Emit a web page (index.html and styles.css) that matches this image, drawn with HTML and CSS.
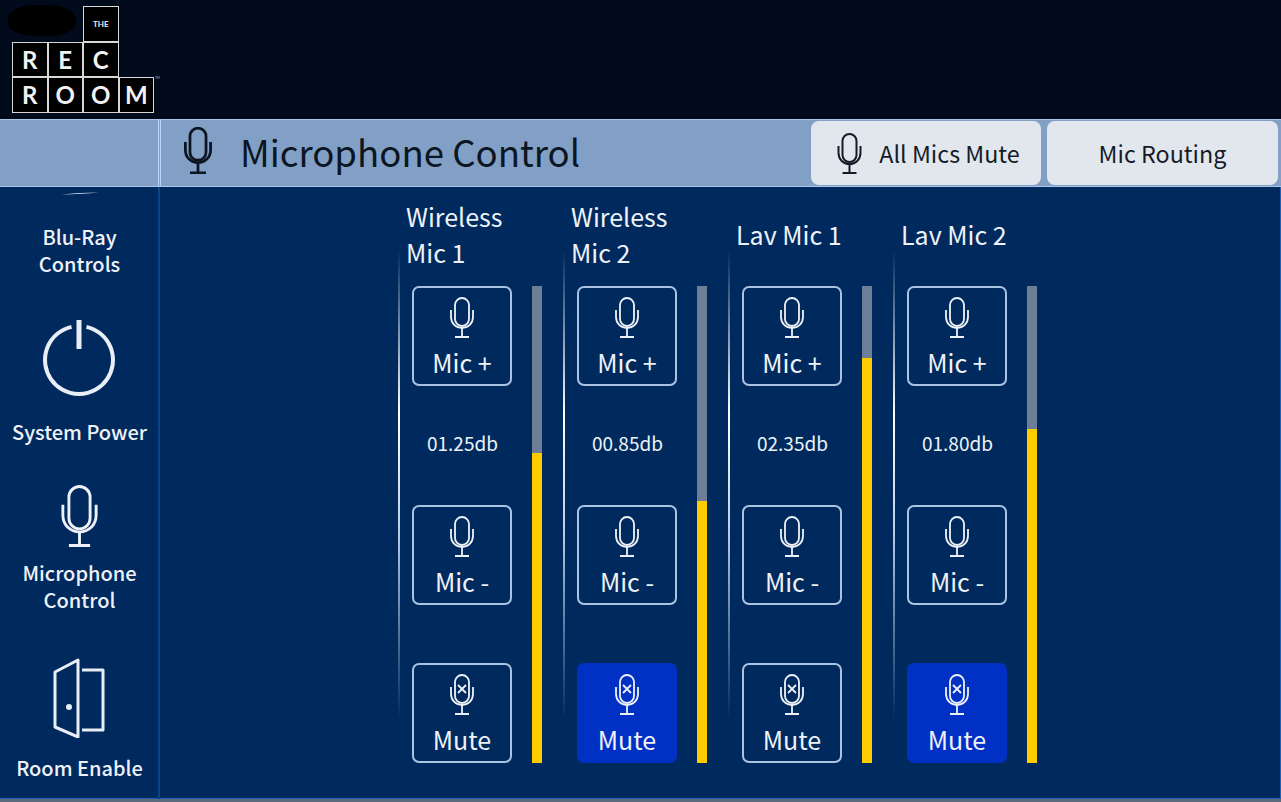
FILE: index.html
```html
<!DOCTYPE html>
<html lang="en">
<head>
    <meta charset="UTF-8">
    <meta name="viewport" content="width=device-width, initial-scale=1.0">
    <title>Microphone Control</title>
    <link rel="stylesheet" href="styles.css">
</head>
<body>

    <svg class="defs" width="0" height="0" aria-hidden="true">
        <symbol id="mic" viewBox="0 0 24 41">
            <g fill="none" stroke="currentColor">
                <rect x="5" y="1" width="14" height="28" rx="7"/>
                <path d="M1 13v7c0 6.500 5 11 11 11s11-4.500 11-11v-7"/>
                <path d="M12 31v9M5 40h14"/>
            </g>
        </symbol>
        <symbol id="mic-off" viewBox="0 0 24 41">
            <g fill="none" stroke="currentColor">
                <rect x="5" y="1" width="14" height="28" rx="7"/>
                <path d="M1 13v7c0 6.500 5 11 11 11s11-4.500 11-11v-7"/>
                <path d="M12 31v9M5 40h14"/>
                <path d="M8 11l8 8M16 11l-8 8"/>
            </g>
        </symbol>
    </svg>

    <header class="top">
        <div class="logo">
            <span class="blot"></span>
            <span class="cell cell-the">THE</span><span class="gap"></span>
            <span class="cell">R</span><span class="cell">E</span><span class="cell">C</span><span class="gap"></span>
            <span class="cell">R</span><span class="cell">O</span><span class="cell">O</span><span class="cell">M</span>
            <span class="tm">TM</span>
        </div>
    </header>

    <div class="band">
        <div class="band-blank"></div>
        <div class="band-main">
            <svg class="icon-title"><use href="#mic"/></svg>
            <h1>Microphone Control</h1>
            <button class="top-btn all-mics"><svg class="icon-small"><use href="#mic"/></svg>All Mics Mute</button>
            <button class="top-btn routing">Mic Routing</button>
        </div>
    </div>

    <div class="body">
        <nav class="side">
            <svg class="sliver" viewBox="0 0 38 3"><path d="M0 2.500C14 2.200 26 1.500 38 0.500C26 0.500 12 1.300 0 2.500z" fill="#e8eef6"/></svg>
            <a class="side-item bluray">Blu-Ray<br>Controls</a>
            <a class="side-item power">
                <svg viewBox="0 0 76 78" width="76" height="78">
                    <g fill="none" stroke="#e8eef6">
                        <path stroke-width="4" d="M30.500 6.840A34 34 0 1 0 45.500 6.840"/>
                        <path stroke-width="5" d="M38 0v29"/>
                    </g>
                </svg>
                System Power
            </a>
            <a class="side-item mic-item">
                <svg class="icon-side"><use href="#mic"/></svg>
                Microphone<br>Control
            </a>
            <a class="side-item door">
                <svg viewBox="0 0 52 80" width="52" height="80">
                    <g fill="none" stroke="#e8eef6" stroke-width="3" stroke-linejoin="round">
                        <path d="M25 2L2 14v55l23 10z"/>
                        <path d="M29 12h21v60H29"/>
                    </g>
                    <circle cx="16" cy="49" r="3" fill="#e8eef6"/>
                </svg>
                Room Enable
            </a>
        </nav>

        <main class="mixer">
            <section class="channel">
                <div class="rule"></div>
                <div class="channel-body">
                    <h2>Wireless<br>Mic 1</h2>
                    <div class="strip">
                        <div class="controls">
                            <button class="mic-btn"><svg class="icon-btn"><use href="#mic"/></svg>Mic +</button>
                            <div class="gain">01.25db</div>
                            <button class="mic-btn"><svg class="icon-btn"><use href="#mic"/></svg>Mic -</button>
                            <button class="mic-btn mute"><svg class="icon-btn"><use href="#mic-off"/></svg>Mute</button>
                        </div>
                        <div class="meter"><div class="level" style="height: 65%"></div></div>
                    </div>
                </div>
            </section>

            <section class="channel">
                <div class="rule"></div>
                <div class="channel-body">
                    <h2>Wireless<br>Mic 2</h2>
                    <div class="strip">
                        <div class="controls">
                            <button class="mic-btn"><svg class="icon-btn"><use href="#mic"/></svg>Mic +</button>
                            <div class="gain">00.85db</div>
                            <button class="mic-btn"><svg class="icon-btn"><use href="#mic"/></svg>Mic -</button>
                            <button class="mic-btn mute active"><svg class="icon-btn"><use href="#mic-off"/></svg>Mute</button>
                        </div>
                        <div class="meter"><div class="level" style="height: 55%"></div></div>
                    </div>
                </div>
            </section>

            <section class="channel">
                <div class="rule"></div>
                <div class="channel-body">
                    <h2>Lav Mic 1</h2>
                    <div class="strip">
                        <div class="controls">
                            <button class="mic-btn"><svg class="icon-btn"><use href="#mic"/></svg>Mic +</button>
                            <div class="gain">02.35db</div>
                            <button class="mic-btn"><svg class="icon-btn"><use href="#mic"/></svg>Mic -</button>
                            <button class="mic-btn mute"><svg class="icon-btn"><use href="#mic-off"/></svg>Mute</button>
                        </div>
                        <div class="meter"><div class="level" style="height: 85%"></div></div>
                    </div>
                </div>
            </section>

            <section class="channel">
                <div class="rule"></div>
                <div class="channel-body">
                    <h2>Lav Mic 2</h2>
                    <div class="strip">
                        <div class="controls">
                            <button class="mic-btn"><svg class="icon-btn"><use href="#mic"/></svg>Mic +</button>
                            <div class="gain">01.80db</div>
                            <button class="mic-btn"><svg class="icon-btn"><use href="#mic"/></svg>Mic -</button>
                            <button class="mic-btn mute active"><svg class="icon-btn"><use href="#mic-off"/></svg>Mute</button>
                        </div>
                        <div class="meter"><div class="level" style="height: 70%"></div></div>
                    </div>
                </div>
            </section>
        </main>
    </div>

</body>
</html>
```

FILE: styles.css
```css
/* page */
html, body {
    height: 100%;
}

body {
    margin: 0;
    display: flex;
    flex-direction: column;
    overflow: hidden;
    background: #002a5e;
    color: #eef2f8;
    font-family: "Noto Sans CJK JP", "Noto Sans", sans-serif;
}

.defs {
    display: block;
}

/* black header with logo */
.top {
    height: 119px;
    flex: none;
    background: #010b1c;
    padding: 6px 0 0 12px;
    box-sizing: border-box;
}

.logo {
    position: relative;
    display: grid;
    grid-template-columns: repeat(4, 35.500px);
    grid-template-rows: repeat(3, 35.500px);
    width: 142px;
    font-family: "Lato", sans-serif;
    font-weight: 700;
    font-size: 24px;
    color: #f2f2f2;
}

.cell {
    display: flex;
    align-items: center;
    justify-content: center;
    background: #000;
    outline: 1.500px solid #d8d8d8;
    outline-offset: -1px;
}

.cell-the {
    grid-column: 3;
    font-size: 8px;
}

.blot {
    position: absolute;
    left: -4px;
    top: -1px;
    width: 68px;
    height: 31px;
    background: #000;
    border-radius: 40% 45% 40% 40%;
}

.tm {
    position: absolute;
    left: 143px;
    top: 70px;
    font-size: 3px;
    font-weight: 400;
    color: #c8c8c8;
}

/* light blue title band */
.band {
    display: flex;
    height: 68px;
    flex: none;
    background: #82a0c6;
    border-top: 1px solid #a9c6ea;
    border-bottom: 1px solid #a9c6ea;
    box-sizing: border-box;
}

.band-blank {
    width: 158px;
    border-right: 1px solid #b4d4f8;
    flex: none;
}

.band-main {
    flex: 1;
    display: flex;
    align-items: center;
    color: #0c1622;
    padding: 0 3px 0 23px;
    margin-left: 1px;
    border-left: 1px solid #b4d4f8;
}

.icon-title {
    width: 28px;
    height: 47px;
    margin-bottom: 5px;
    color: #0c1622;
    stroke-width: 2.400;
}

h1 {
    margin: 0 0 0 28px;
    padding-bottom: 2px;
    font-size: 36.600px;
    line-height: 50px;
    font-weight: 400;
    flex: 1;
}

.top-btn {
    display: flex;
    align-items: center;
    justify-content: center;
    width: 231px;
    height: 64px;
    margin-left: 6px;
    border: 0;
    border-radius: 8px;
    background: #e2e7ee;
    color: #141c28;
    font-family: inherit;
    font-size: 23.300px;
    padding: 0;
}

.all-mics {
    width: 230px;
    padding-left: 5px;
}

.icon-small {
    width: 25px;
    height: 41px;
    margin-right: 17px;
    stroke-width: 2;
}

/* sidebar + mixer */
.body {
    flex: 1;
    display: flex;
    min-height: 0;
    border-bottom: 3px solid #5a6a7c;
    box-shadow: inset -1px -1px 0 #1d62b5;
}

.side {
    width: 157px;
    padding-left: 1px;
    flex: none;
    display: flex;
    flex-direction: column;
    align-items: center;
    border-right: 2px solid #0a4488;
    overflow: hidden;
    font-size: 20px;
    line-height: 27px;
    font-weight: 500;
    text-align: center;
}

.sliver {
    width: 38px;
    height: 3px;
    margin-top: 5px;
    flex: none;
}

.side-item {
    display: block;
    white-space: nowrap;
}

.side-item svg {
    display: block;
    margin: 0 auto;
}

.bluray {
    margin-top: 28px;
}

.power {
    margin-top: 43px;
}

.power svg {
    margin-bottom: 20px;
}

.mic-item {
    margin-top: 40px;
}

.side-item .icon-side {
    width: 37px;
    height: 62px;
    margin-bottom: 12px;
    stroke-width: 1.900;
}

.door {
    margin-top: 45px;
}

.door svg {
    margin-bottom: 16px;
}

/* channels */
.mixer {
    flex: 1;
    display: flex;
    padding-left: 238px;
}

.channel {
    width: 165px;
    flex: none;
    display: flex;
}

.rule {
    width: 2px;
    height: 470px;
    margin-top: 63px;
    flex: none;
    background: linear-gradient(to bottom, rgba(255, 255, 255, 0), #ffffff 35%, #b9cde6 60%, rgba(255, 255, 255, 0));
}

.channel-body {
    margin-left: 6px;
}

h2 {
    margin: 11px 0 0;
    height: 72px;
    display: flex;
    align-items: center;
    font-size: 25px;
    line-height: 36px;
    font-weight: 400;
    white-space: nowrap;
}

.strip {
    display: flex;
    margin: 16px 0 0 6px;
}

.controls {
    width: 100px;
    display: flex;
    flex-direction: column;
}

.mic-btn {
    width: 100px;
    height: 100px;
    flex: none;
    display: flex;
    flex-direction: column;
    align-items: center;
    padding: 9px 0 0;
    box-sizing: border-box;
    background: transparent;
    border: 2px solid #a9c3e0;
    border-radius: 7px;
    color: #eef2f8;
    font-family: inherit;
    font-size: 25px;
    line-height: 34px;
}

.mic-btn.mute {
    margin-top: 58px;
}

.mic-btn.active {
    background: #0030c4;
    border-color: #0030c4;
}

.icon-btn {
    width: 24px;
    height: 41px;
    margin-bottom: 7px;
    flex: none;
    stroke-width: 1.800;
}

.gain {
    height: 119px;
    line-height: 114px;
    padding-left: 1px;
    text-align: center;
    font-size: 19px;
}

.meter {
    width: 10px;
    margin-left: 20px;
    display: flex;
    align-items: flex-end;
    background: #6d7f97;
}

.level {
    width: 100%;
    background: #ffcc00;
}
```
